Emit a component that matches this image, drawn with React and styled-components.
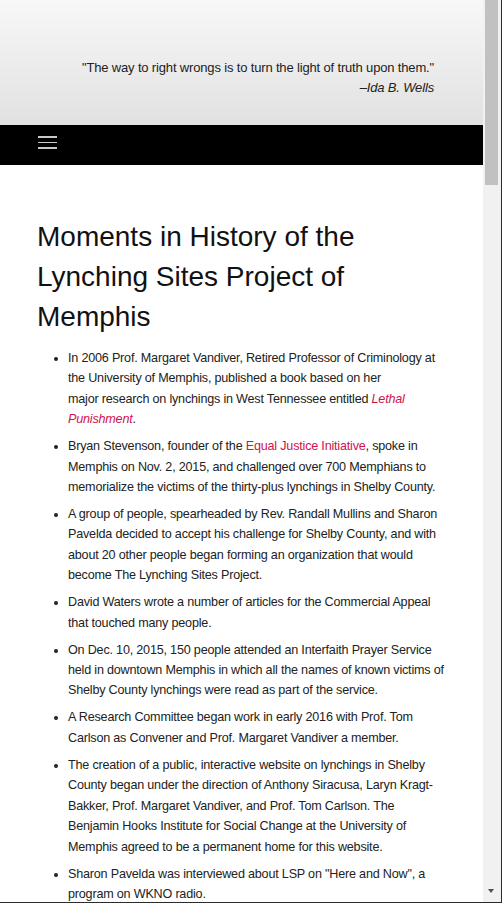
import React from 'react';
import styled, { createGlobalStyle } from 'styled-components';

const GlobalStyle = createGlobalStyle`
  body {
    margin: 0;
    background: #fff;
    color: #222;
    font-family: "Liberation Sans", Arial, sans-serif;
  }
  * { box-sizing: border-box; }
`;

const Page = styled.div`
  margin-right: 19px;
`;

const Header = styled.header`
  height: 125px;
  display: flex;
  flex-direction: column;
  justify-content: flex-end;
  align-items: flex-end;
  padding: 0 49px 27px 0;
  background: linear-gradient(to bottom, #f8f8f8 0%, #e1e1e1 100%);
`;

const Quote = styled.blockquote`
  margin: 0;
  text-align: right;
  font-size: 13px;
  letter-spacing: -0.16px;
  line-height: 20px;
  color: #222;
`;

const Cite = styled.cite`
  display: block;
  font-size: 13px;
  letter-spacing: -0.16px;
  font-style: italic;
  line-height: 20px;
  color: #222;
`;

const NavBar = styled.nav`
  height: 40px;
  background: #000;
  display: flex;
  align-items: flex-start;
  padding: 11px 0 0 38px;
`;

const MenuButton = styled.button`
  border: 0;
  padding: 0;
  background: transparent;
  width: 19px;
  height: 13px;
  display: flex;
  flex-direction: column;
  justify-content: space-between;
  cursor: pointer;
`;

const Bar = styled.span`
  display: block;
  height: 1.6px;
  background: #c8c8c8;
`;

const Main = styled.main`
  padding: 52px 37px 40px 37px;
`;

const Title = styled.h1`
  margin: 0;
  font-weight: 400;
  font-size: 28px;
  line-height: 40px;
  color: #111;
`;

const List = styled.ul`
  margin: 11px 0 0;
  padding-left: 31px;
  font-size: 12.6px;
  letter-spacing: -0.2px;
  line-height: 20.4px;
`;

const Item = styled.li`
  margin-bottom: 6.6px;
`;

const Link = styled.a`
  color: #d0124e;
  text-decoration: none;
  font-style: ${p => (p.$italic ? 'italic' : 'normal')};
`;

/* window scrollbar and frame, as seen in the screenshot */
const ScrollTrack = styled.div`
  position: fixed;
  top: 0;
  right: 1px;
  bottom: 1px;
  width: 18px;
  background: #f1f1f1;
  display: flex;
  flex-direction: column;
  justify-content: space-between;
  align-items: flex-start;
  padding: 0 3px 9px 2px;
`;

const Thumb = styled.div`
  width: 13px;
  height: 185px;
  background: #c1c1c1;
`;

const DownArrow = styled.div`
  margin-left: 3px;
  width: 0;
  height: 0;
  border-left: 3.5px solid transparent;
  border-right: 3.5px solid transparent;
  border-top: 4px solid #505050;
`;

const Frame = styled.div`
  position: fixed;
  inset: 0;
  border-right: 1px solid #2b2b2b;
  border-bottom: 1px solid #2b2b2b;
  pointer-events: none;
`;

export default function App() {
  return (
    <>
      <GlobalStyle />
      <Page>
        <Header>
          <Quote>"The way to right wrongs is to turn the light of truth upon them."</Quote>
          <Cite>–Ida B. Wells</Cite>
        </Header>
        <NavBar>
          <MenuButton aria-label="Menu">
            <Bar />
            <Bar />
            <Bar />
          </MenuButton>
        </NavBar>
        <Main>
          <Title>Moments in History of the Lynching Sites Project of Memphis</Title>
          <List>
            <Item>
              In 2006 Prof. Margaret Vandiver, Retired Professor of Criminology at the University of Memphis, published a book based on her
              <br />
              major research on lynchings in West Tennessee entitled <Link href="#" $italic>Lethal Punishment</Link>.
            </Item>
            <Item>
              Bryan Stevenson, founder of the <Link href="#">Equal Justice Initiative</Link>, spoke in Memphis on Nov. 2, 2015, and challenged over 700 Memphians to memorialize the victims of the thirty-plus lynchings in Shelby{'\u00a0'}County.
            </Item>
            <Item>
              A group of people, spearheaded by Rev. Randall Mullins and Sharon Pavelda decided to accept his challenge for Shelby County, and with about 20 other people began forming an organization that would become The Lynching Sites Project.
            </Item>
            <Item>
              David Waters wrote a number of articles for the Commercial Appeal that touched many people.
            </Item>
            <Item>
              On Dec. 10, 2015, 150 people attended an Interfaith Prayer Service held in downtown Memphis in which all the names of known victims of Shelby County lynchings were read as part of the service.
            </Item>
            <Item>
              A Research Committee began work in early 2016 with Prof. Tom Carlson as Convener and Prof. Margaret Vandiver a member.
            </Item>
            <Item>
              The creation of a public, interactive website on lynchings in Shelby County began under the direction of Anthony Siracusa, Laryn Kragt-Bakker, Prof. Margaret Vandiver, and Prof. Tom Carlson. The Benjamin Hooks Institute for Social Change at the University of Memphis agreed to be a permanent home for this website.
            </Item>
            <Item>
              Sharon Pavelda was interviewed about LSP on "Here and Now", a program on WKNO radio.
            </Item>
          </List>
        </Main>
      </Page>
      <ScrollTrack aria-hidden="true">
        <Thumb />
        <DownArrow />
      </ScrollTrack>
      <Frame aria-hidden="true" />
    </>
  );
}
